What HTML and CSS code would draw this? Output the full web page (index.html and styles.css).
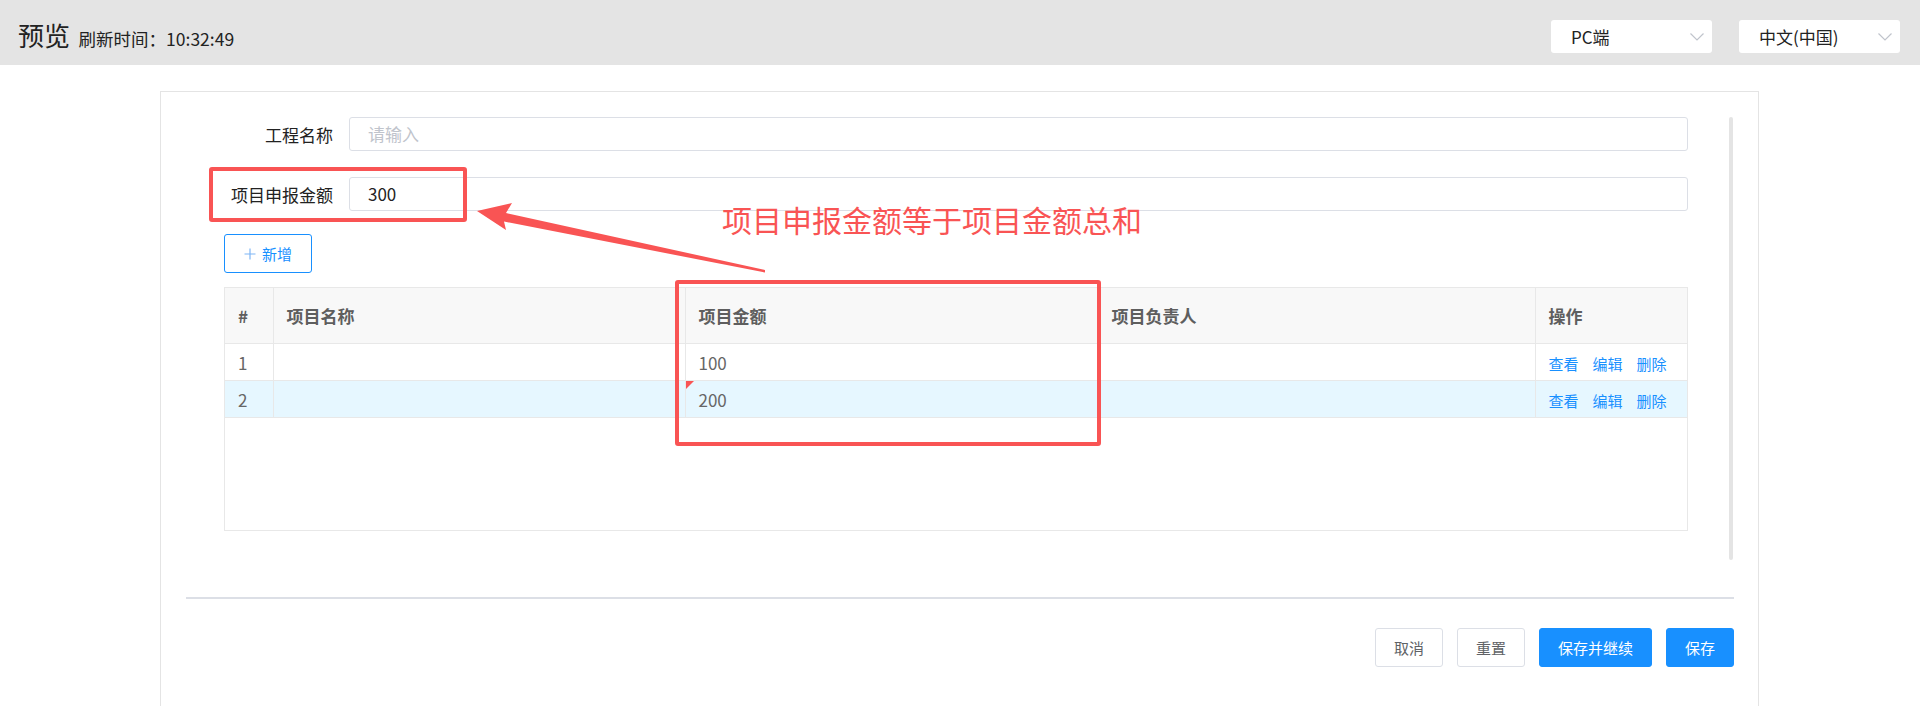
FILE: index.html
```html
<!DOCTYPE html>
<html lang="zh-CN">

<head>
    <meta charset="utf-8">
    <meta name="viewport" content="width=device-width, initial-scale=1.0">
    <title>预览</title>

    <link rel="stylesheet" href="styles.css">
</head>

<body>
    <header class="topbar">
        <div class="title">
            <span class="title-main">预览</span>
            <span class="refresh">刷新时间：10:32:49</span>
        </div>
        <div class="selects">
            <div class="select">
                <span>PC端</span>
                <svg width="14" height="8" viewBox="0 0 14 8"><polyline points="0.5,0.5 7,7 13.5,0.5" fill="none" stroke="#c0c4cc" stroke-width="1.2"/></svg>
            </div>
            <div class="select">
                <span>中文(中国)</span>
                <svg width="14" height="8" viewBox="0 0 14 8"><polyline points="0.5,0.5 7,7 13.5,0.5" fill="none" stroke="#c0c4cc" stroke-width="1.2"/></svg>
            </div>
        </div>
    </header>

    <main class="page">
        <section class="card">
            <div class="card-body">
                <div class="form-area">
                    <div class="form-row">
                        <label class="form-label">工程名称</label>
                        <div class="input placeholder">请输入</div>
                    </div>
                    <div class="form-row">
                        <label class="form-label">项目申报金额</label>
                        <div class="input">300</div>
                    </div>

                    <button class="btn-add">
                        <svg width="12" height="12" viewBox="0 0 12 12"><path d="M6 0.5V11.5M0.5 6H11.5" stroke="#7fb6f5" stroke-width="1.2"/></svg>
                        新增
                    </button>

                    <div class="table-wrap">
                        <table class="grid">
                            <colgroup>
                                <col style="width:48px">
                                <col style="width:412px">
                                <col style="width:413px">
                                <col style="width:437px">
                                <col style="width:152px">
                            </colgroup>
                            <thead>
                                <tr>
                                    <th>#</th>
                                    <th>项目名称</th>
                                    <th>项目金额</th>
                                    <th>项目负责人</th>
                                    <th>操作</th>
                                </tr>
                            </thead>
                            <tbody>
                                <tr>
                                    <td>1</td>
                                    <td></td>
                                    <td>100</td>
                                    <td></td>
                                    <td class="actions"><a>查看</a><a>编辑</a><a>删除</a></td>
                                </tr>
                                <tr class="current">
                                    <td>2</td>
                                    <td></td>
                                    <td class="dirty">200</td>
                                    <td></td>
                                    <td class="actions"><a>查看</a><a>编辑</a><a>删除</a></td>
                                </tr>
                            </tbody>
                        </table>
                    </div>
                </div>
                <div class="scrollbar"></div>
            </div>

            <div class="card-footer">
                <button class="btn">取消</button>
                <button class="btn">重置</button>
                <button class="btn btn-primary">保存并继续</button>
                <button class="btn btn-primary">保存</button>
            </div>
        </section>
    </main>

    <!-- annotations drawn over the screenshot -->
    <div class="annotations">
        <div class="mark mark-amount"></div>
        <div class="mark mark-column"></div>
        <div class="note">项目申报金额等于项目金额总和</div>
        <svg class="arrow" width="1920" height="706" viewBox="0 0 1920 706">
            <polygon points="477,211 512,203 506,213 765,270 765,272.5 504,221.5 506,230" fill="#f95454"/>
        </svg>
    </div>
</body>
</html>
```

FILE: styles.css
```css
html {
    margin: 0;
}

body {
    margin: 0;
    font-family: "Noto Sans CJK SC", "Noto Sans", sans-serif;
    color: #333;
    background: #fff;
    overflow: hidden;
    height: 706px;
    position: relative;
}

/* top bar */
.topbar {
    height: 65px;
    background: #e4e4e4;
    display: flex;
    justify-content: space-between;
    align-items: flex-start;
    padding: 0 20px 0 18px;
    box-sizing: border-box;
}

.title {
    margin-top: 20px;
    line-height: 30px;
}

.title-main {
    font-size: 26px;
    color: #222;
}

.refresh {
    font-size: 17.5px;
    color: #222;
    margin-left: 5px;
}

.selects {
    display: flex;
    gap: 27px;
    padding-top: 20px;
}

.select {
    width: 161px;
    height: 33px;
    background: #fff;
    border-radius: 3px;
    box-sizing: border-box;
    padding: 0 8px 0 20px;
    display: flex;
    justify-content: space-between;
    align-items: center;
    font-size: 17px;
    color: #222;
}

/* card */
.page {
    padding: 26px 161px 0 160px;
}

.card {
    border: 1px solid #e4e4e4;
    border-bottom: none;
    height: 615px;
    box-sizing: border-box;
}

.card-body {
    display: flex;
    align-items: flex-start;
    padding: 25px 25px 37px 63px;
}

.form-area {
    flex: 1;
}

.scrollbar {
    width: 6px;
    height: 443px;
    margin-left: 41px;
    border-radius: 3px;
    background: #e4e4e4;
}

.form-row {
    display: flex;
    align-items: center;
    height: 34px;
    margin-bottom: 26px;
}

.form-row:nth-child(2) {
    margin-bottom: 23px;
}

.form-label {
    width: 125px;
    padding-right: 16px;
    box-sizing: border-box;
    text-align: right;
    font-size: 17px;
    color: #222;
}

.input {
    flex: 1;
    height: 34px;
    border: 1px solid #dcdfe6;
    border-radius: 3px;
    box-sizing: border-box;
    padding-left: 18px;
    font-size: 17px;
    line-height: 32px;
    color: #222;
}

.input.placeholder {
    color: #c0c4cc;
}

.btn-add {
    width: 88px;
    height: 39px;
    border: 1px solid #1890ff;
    border-radius: 3px;
    background: #fff;
    color: #1890ff;
    font-family: inherit;
    font-size: 15px;
    display: flex;
    align-items: center;
    justify-content: center;
    gap: 6px;
    padding: 0;
    margin-bottom: 14px;
}

/* table */
.table-wrap {
    height: 244px;
    border: 1px solid #e8e8e8;
    box-sizing: border-box;
}

.grid {
    width: 100%;
    border-collapse: collapse;
    table-layout: fixed;
    font-size: 17px;
}

.grid th,
.grid td {
    border-left: 1px solid #e8e8e8;
    border-bottom: 1px solid #e8e8e8;
    padding: 0 0 0 13px;
    text-align: left;
    color: #666;
}

.grid th:first-child,
.grid td:first-child {
    border-left: none;
}

.grid th {
    height: 55px;
    background: #f8f8f8;
    font-weight: bold;
    color: #5e5e5e;
}

.grid td {
    height: 36px;
}

.grid tr.current td {
    background: #e6f7ff;
}

.dirty {
    position: relative;
}

.dirty::before {
    content: "";
    position: absolute;
    left: 0;
    top: 0;
    border-top: 8px solid #f95454;
    border-right: 8px solid transparent;
}

.actions a {
    color: #1890ff;
    font-size: 15px;
    margin-right: 14px;
}

.actions a:last-child {
    margin-right: 0;
}

/* footer */
.card-footer {
    margin: 0 24px 0 25px;
    border-top: 2px solid #dcdfe6;
    padding-top: 29px;
    display: flex;
    justify-content: flex-end;
    gap: 14px;
}

.btn {
    height: 39px;
    padding: 0 18px;
    border: 1px solid #dcdfe6;
    border-radius: 3px;
    background: #fff;
    color: #606266;
    font-family: inherit;
    font-size: 15px;
}

.btn-primary {
    background: #1890ff;
    border-color: #1890ff;
    color: #fff;
}

/* annotations */
.annotations {
    position: absolute;
    left: 0;
    top: 0;
    width: 1920px;
    height: 706px;
    pointer-events: none;
}

.mark {
    position: absolute;
    border: 4px solid #f95454;
    border-radius: 3px;
    box-sizing: border-box;
}

.mark-amount {
    left: 209px;
    top: 167px;
    width: 258px;
    height: 55px;
}

.mark-column {
    left: 675px;
    top: 280px;
    width: 426px;
    height: 166px;
}

.note {
    position: absolute;
    left: 722px;
    top: 203px;
    font-size: 30px;
    line-height: 32px;
    color: #f95454;
}

.arrow {
    position: absolute;
    left: 0;
    top: 0;
}
```
